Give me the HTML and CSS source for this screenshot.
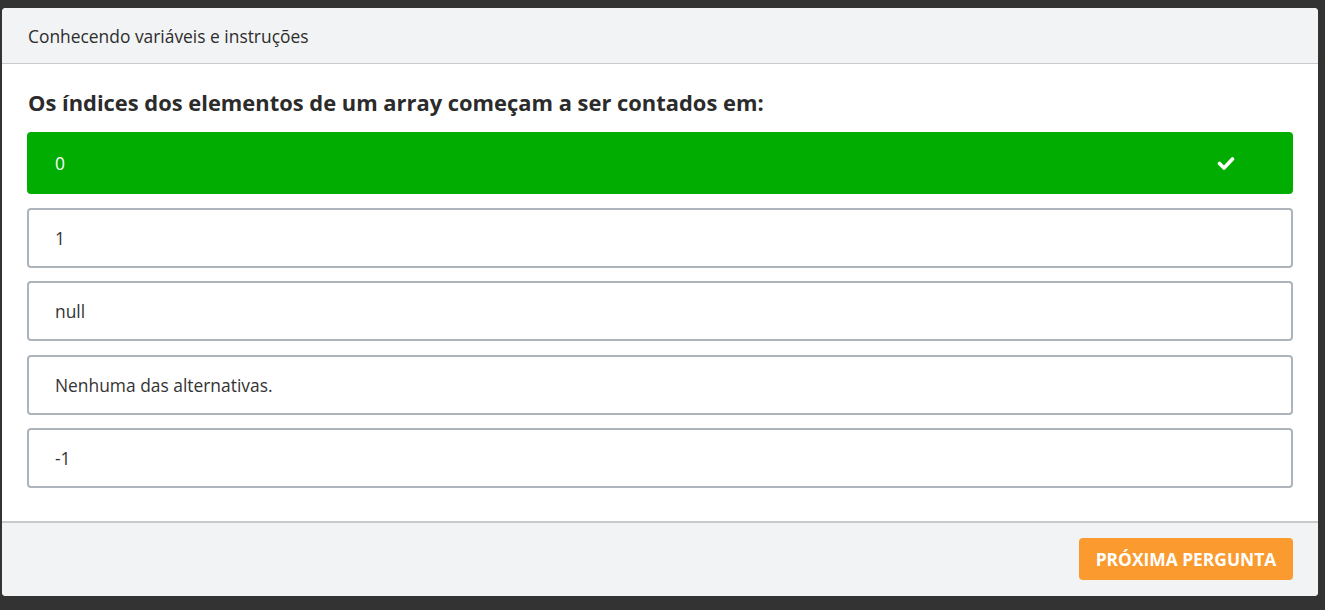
FILE: index.html
```html
<!DOCTYPE html>
<html lang="pt-BR">
<head>
<meta charset="utf-8">
<title>Quiz</title>
<link rel="stylesheet" href="styles.css">
</head>
<body>
<div class="page">
  <div class="card">
    <div class="card-header">Conhecendo variáveis e instruções</div>
    <div class="card-body">
      <h2 class="question">Os índices dos elementos de um array começam a ser contados em:</h2>
      <ul class="options">
        <li class="option correct">
          <span>0</span>
          <svg class="check" viewBox="0 0 18 15" width="18" height="15" aria-hidden="true"><polyline points="2.5,7.5 7,12 15.5,3" fill="none" stroke="#fff" stroke-width="3.6" stroke-linecap="round" stroke-linejoin="round"/></svg>
        </li>
        <li class="option">1</li>
        <li class="option">null</li>
        <li class="option">Nenhuma das alternativas.</li>
        <li class="option">-1</li>
      </ul>
    </div>
    <div class="card-footer">
      <button class="next-btn">Próxima pergunta</button>
    </div>
  </div>
</div>
</body>
</html>
```
FILE: styles.css
```css
html, body {
  margin: 0;
  padding: 0;
  background: #333333;
  font-family: "Open Sans", "Liberation Sans", sans-serif;
  color: #333;
}
.page {
  padding: 8px 7px 14px 2px;
}
.card {
  width: 1316px;
  background: #fff;
  border-radius: 4px;
  overflow: hidden;
}
.card-header {
  background: #f2f3f5;
  border-bottom: 1px solid #c8ccd1;
  height: 55px;
  display: flex;
  align-items: center;
  padding-left: 26px;
  font-size: 17.4px;
  color: #2d2d2d;
}
.card-body {
  padding: 23px 25px 33px 25px;
}
.question {
  margin: 0 0 13px 1px;
  font-size: 21.9px;
  font-weight: 700;
  line-height: 32px;
  color: #2b2b2b;
}
.options {
  list-style: none;
  margin: 0;
  padding: 0;
  display: flex;
  flex-direction: column;
  gap: 14px;
}
.option {
  border: 2px solid #adb4bb;
  border-radius: 4px;
  box-sizing: border-box;
  height: 60px;
  padding: 0 26px;
  display: flex;
  align-items: center;
  font-size: 17.4px;
  color: #333;
}
.option + .option {
  margin-top: -0.5px;
}
.option.correct {
  background: #00ad00;
  border-color: #00ad00;
  color: #fff;
  height: 62px;
  justify-content: space-between;
  padding-right: 56px;
}
.check {
  display: block;
}
.card-footer {
  background: #f2f3f5;
  border-top: 2px solid #c8c9cd;
  padding: 15px 25px 16px;
  display: flex;
  justify-content: flex-end;
}
.next-btn {
  background: #fb9a2e;
  color: #fff;
  border: none;
  border-radius: 4px;
  height: 42px;
  width: 214px;
  font-family: "Open Sans", "Liberation Sans", sans-serif;
  font-weight: 700;
  font-size: 17.4px;
  text-transform: uppercase;
  cursor: pointer;
}
```
